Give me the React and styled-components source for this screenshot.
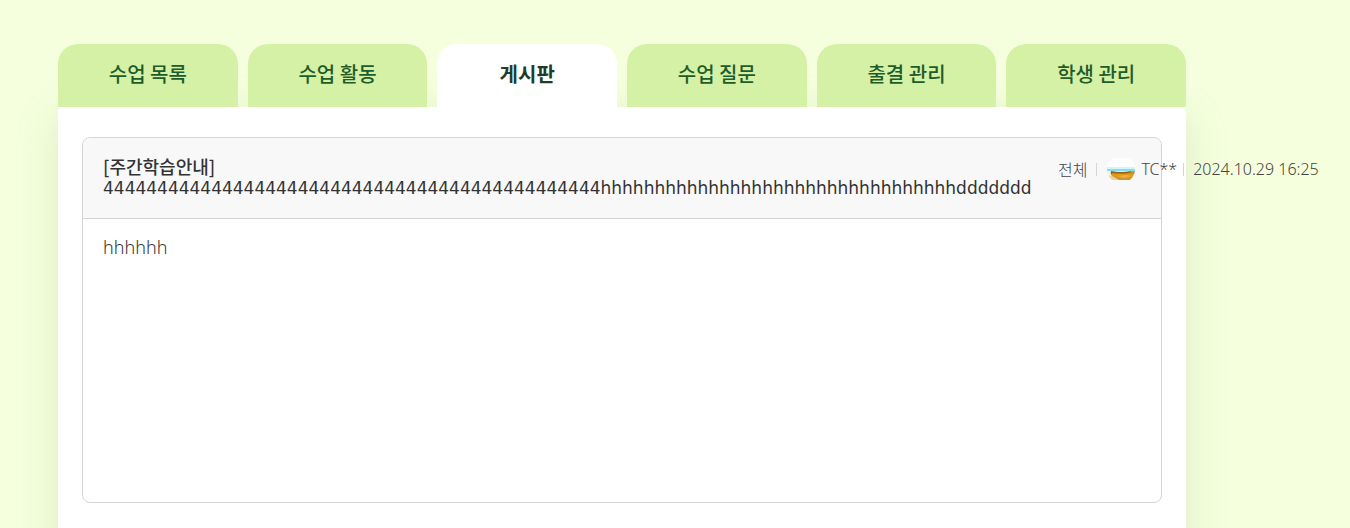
import React, { useState } from "react";
import styled, { createGlobalStyle } from "styled-components";

const TABS = ["수업 목록", "수업 활동", "게시판", "수업 질문", "출결 관리", "학생 관리"];

const post = {
  category: "[주간학습안내]",
  title: "4".repeat(46) + "h".repeat(33) + "d".repeat(7),
  target: "전체",
  writer: "TC**",
  date: "2024.10.29 16:25",
  content: "hhhhhh",
};

function Avatar() {
  return (
    <svg width="30" height="22" viewBox="0 0 30 22" aria-hidden="true">
      <defs>
        <clipPath id="avatar-clip">
          <circle cx="15" cy="11" r="14" />
        </clipPath>
        <linearGradient id="avatar-sand" x1="0" y1="0" x2="0" y2="1">
          <stop offset="0" stopColor="#c07c10" />
          <stop offset="0.4" stopColor="#e09a18" />
          <stop offset="1" stopColor="#cf9138" />
        </linearGradient>
      </defs>
      <g clipPath="url(#avatar-clip)">
        <rect width="30" height="22" fill="#fefefe" />
        <rect y="9" width="30" height="2" fill="#d3f4f8" />
        <rect y="11" width="30" height="2" fill="#7fdfee" />
        <rect y="13" width="30" height="9" fill="#eef3e6" />
        <path d="M0 17l7 1 6 4H0z" fill="#ecd3a2" />
        <path d="M5 14q10 1 24-1v9H13l-7-4q-2-2-1-4z" fill="url(#avatar-sand)" />
        <path d="M5 13q10 2 21 0l-3 2q-8 1-17 0v2q-2-2-1-4z" fill="#94601a" />
        <path d="M11 18l9-1 6 1-8 2z" fill="#eeb136" />
      </g>
    </svg>
  );
}

export default function App() {
  const [active, setActive] = useState("게시판");

  return (
    <>
      <GlobalStyle />
      <Page>
        <TabList>
          {TABS.map((tab) => (
            <Tab
              key={tab}
              type="button"
              $active={tab === active}
              onClick={() => setActive(tab)}
            >
              {tab}
            </Tab>
          ))}
        </TabList>

        <Panel>
          <Post>
            <PostHeader>
              <PostTitle>
                <Category>{post.category}</Category> {post.title}
              </PostTitle>
              <PostMeta>
                <Target>{post.target}</Target>
                <Divider />
                <Writer>
                  <Avatar />
                  {post.writer}
                </Writer>
                <Divider />
                <time>{post.date}</time>
              </PostMeta>
            </PostHeader>
            <PostBody>{post.content}</PostBody>
          </Post>
        </Panel>
      </Page>
    </>
  );
}

const GlobalStyle = createGlobalStyle`
  * {
    box-sizing: border-box;
  }

  html {
    scrollbar-width: none;
  }

  body {
    margin: 0;
    background-color: #f5ffde;
    color: #333;
    font-family: "Noto Sans", "Noto Sans CJK KR", sans-serif;
  }
`;

const Page = styled.main`
  min-height: 100vh;
  padding: 44px 164px 0 58px;
`;

const TabList = styled.nav`
  display: flex;
  gap: 10px;
`;

const Tab = styled.button`
  flex: 1;
  height: 63px;
  padding: 0 0 4px;
  border: none;
  border-radius: 20px 20px 0 0;
  background-color: ${(props) => (props.$active ? "#fff" : "#d5f1a5")};
  color: ${(props) => (props.$active ? "#1f3d26" : "#1e5c2b")};
  font-family: "Noto Sans CJK KR", sans-serif;
  font-size: 20px;
  font-weight: ${(props) => (props.$active ? 700 : 500)};
  cursor: pointer;
  z-index: 1; /* keeps the panel shadow behind the tabs */
`;

const Panel = styled.section`
  padding: 30px 24px 80px;
  background-color: #fff;
  box-shadow: 0 10px 40px rgba(130, 160, 80, 0.2);
`;

const Post = styled.article`
  border: 1px solid #d5d5d5;
  border-radius: 8px;
`;

const PostHeader = styled.header`
  display: flex;
  height: 81px;
  padding: 18px 20px;
  border-bottom: 1px solid #d5d5d5;
  border-radius: 8px 8px 0 0;
  background-color: #f8f8f8;
`;

const PostTitle = styled.h1`
  flex: none;
  width: 92%;
  margin: 0;
  font-family: "DejaVu Sans", sans-serif;
  font-size: 17px;
  font-weight: 400;
  line-height: 20px;
`;

const Category = styled.span`
  font-family: "Noto Sans CJK KR", sans-serif;
  font-size: 18px;
  font-weight: 500;
`;

const PostMeta = styled.div`
  display: flex;
  flex: none;
  align-items: center;
  height: 26px;
  color: #444;
  font-size: 16px;
  font-weight: 300;
  white-space: nowrap;
`;

const Target = styled.span`
  padding-right: 3px;
`;

const Divider = styled.span`
  width: 1px;
  height: 13px;
  margin: 0 9px 0 6px;
  background-color: #d5d5d5;
`;

const Writer = styled.span`
  display: flex;
  align-items: center;
  gap: 5px;
`;

const PostBody = styled.div`
  min-height: 283px;
  padding: 17px 20px;
  font-size: 18px;
  font-weight: 300;
  line-height: 22px;
`;
